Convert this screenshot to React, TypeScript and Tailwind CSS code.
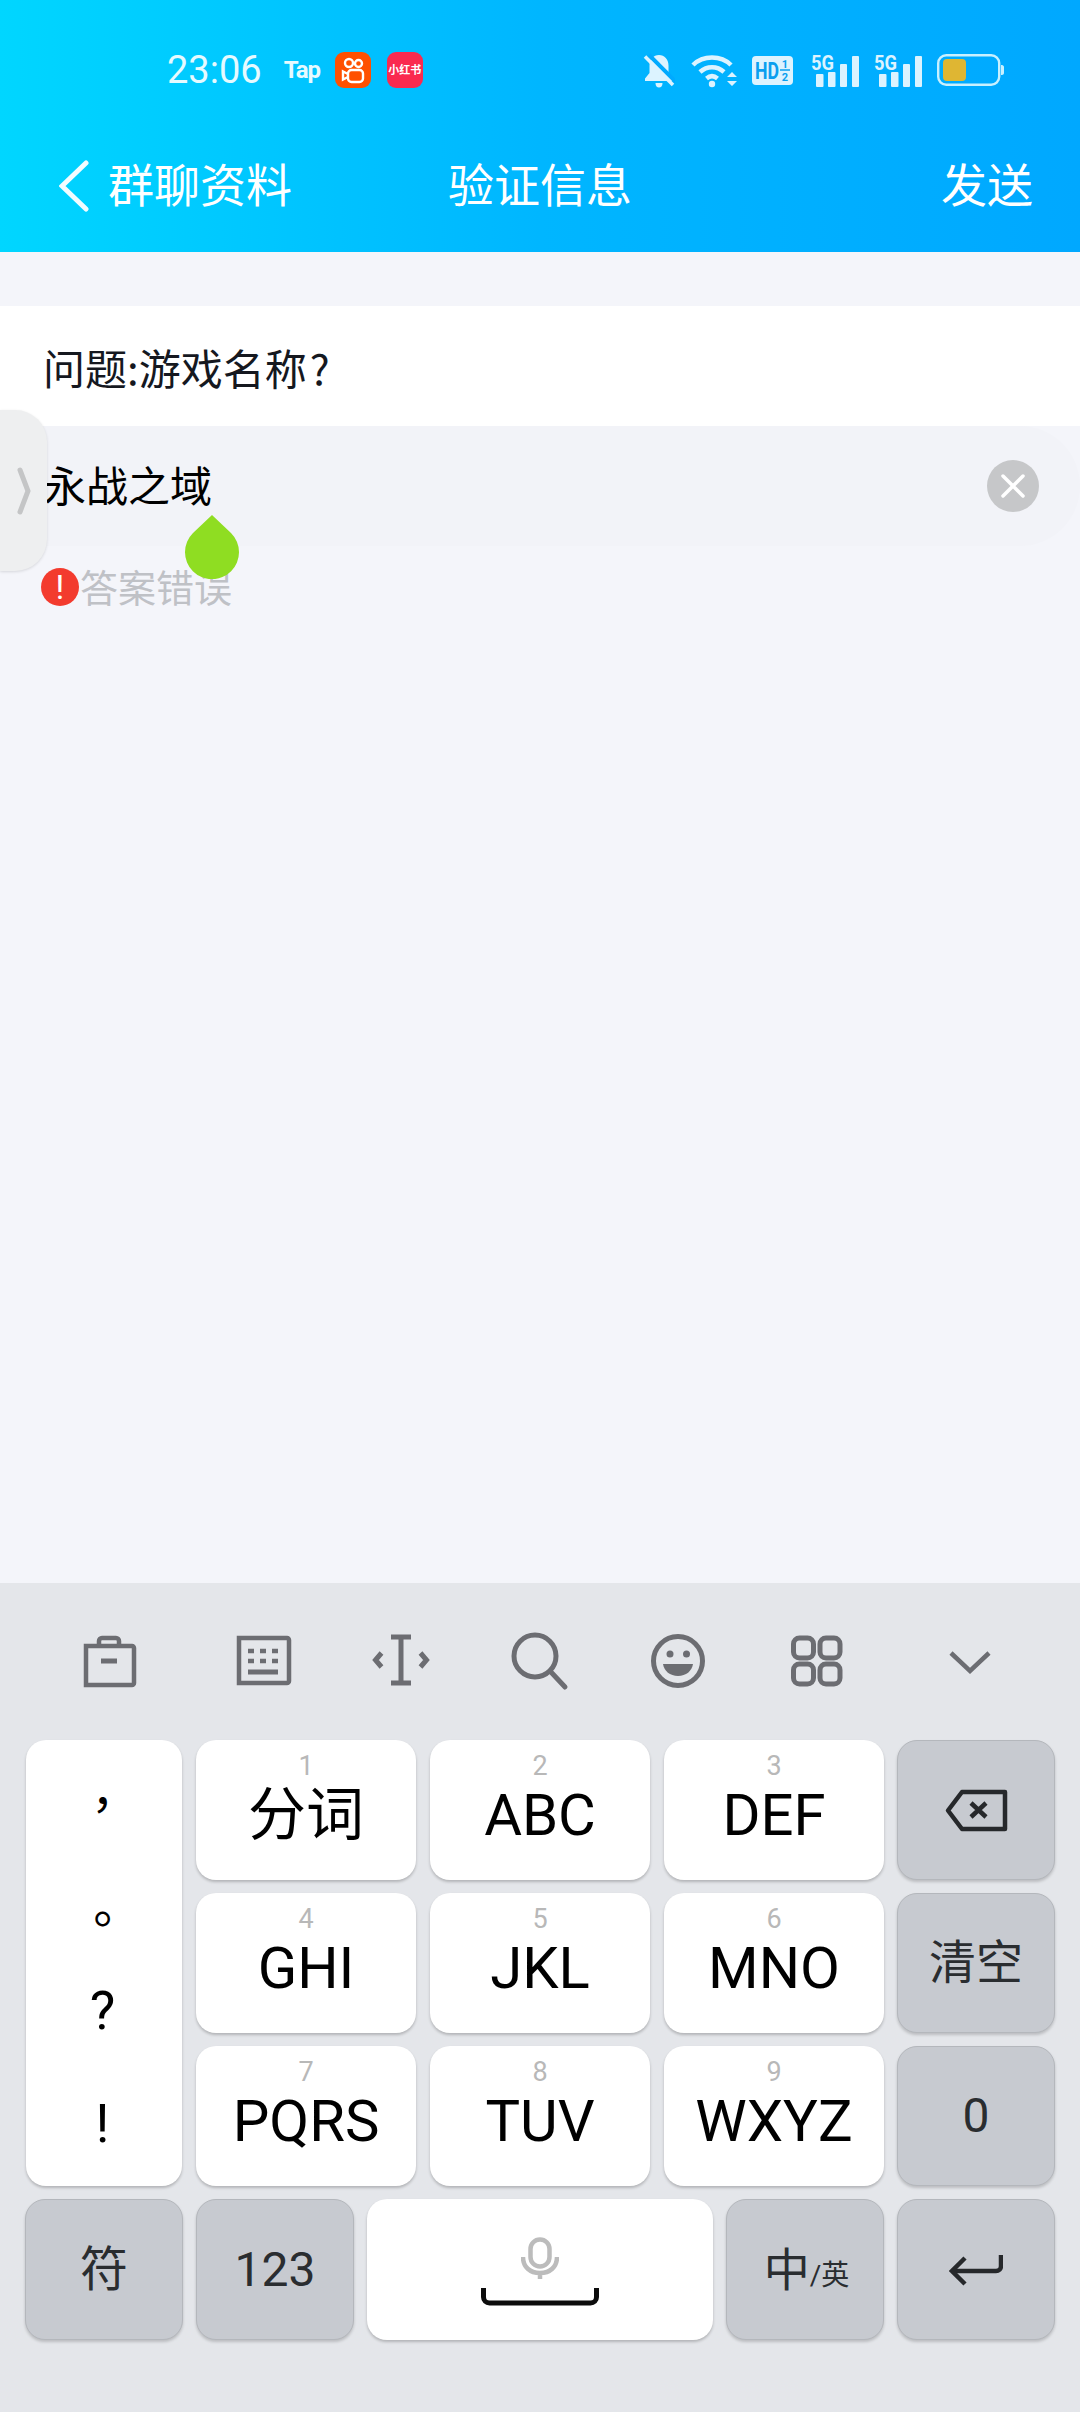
import type { ReactNode } from 'react';

const whiteKey = 'bg-white rounded-[20px] shadow-[0_2px_3px_rgba(0,0,0,0.22)]';
const grayKey = 'bg-[#c7cad0] rounded-[20px] border border-[#b4b7bc] shadow-[0_2px_3px_rgba(0,0,0,0.18)] text-[#2a2d30]';

function BellOff() {
  return (
    <svg width="32" height="35" viewBox="0 0 32 35" fill="#dcf3ff">
      <path d="M16 2c-5.500 0-9.500 4.500-9.500 10.500V20L2 25.500V28h28v-2.500L25.500 20v-7.500C25.500 6.500 21.500 2 16 2z" />
      <path d="M12.500 30h7c0 3-1.500 4.500-3.500 4.500s-3.500-1.500-3.500-4.500z" />
      <path d="M6 2L33 29" stroke="#00aaff" strokeWidth="4" />
      <path d="M2 3.500L30 32" stroke="#dcf3ff" strokeWidth="3.500" />
    </svg>
  );
}

function Wifi() {
  return (
    <svg width="46" height="36" viewBox="0 0 46 36" fill="none" stroke="#dcf3ff" strokeWidth="4.500">
      <path d="M2 13C12 3 30 3 40 13" />
      <path d="M9 20c7-6.500 17-6.500 24 0" />
      <path d="M15.500 26.500c3.500-3 7.500-3 11 0" />
      <circle cx="21" cy="32" r="3.200" fill="#dcf3ff" stroke="none" />
      <path d="M36 25l5-5 5 5zM36 29h10l-5 5z" fill="#dcf3ff" stroke="none" />
    </svg>
  );
}

function Hd() {
  return (
    <svg width="41" height="29" viewBox="0 0 41 29">
      <rect width="41" height="29" rx="4" fill="#dcf3ff" />
      <text x="3" y="23" fontFamily="Roboto" fontWeight="700" fontSize="23" fill="#0a9fef" textLength="24" lengthAdjust="spacingAndGlyphs">HD</text>
      <text x="33" y="12" textAnchor="middle" fontFamily="Roboto" fontWeight="700" fontSize="11" fill="#0a9fef">1</text>
      <text x="33" y="25" textAnchor="middle" fontFamily="Roboto" fontWeight="700" fontSize="11" fill="#0a9fef">2</text>
      <path d="M28 14h10" stroke="#0a9fef" strokeWidth="1.500" />
    </svg>
  );
}

function Signal() {
  return (
    <svg className="overflow-visible" width="48" height="33" viewBox="0 0 48 33" fill="#dcf3ff">
      <text x="0" y="15.500" fontFamily="Roboto" fontWeight="700" fontSize="20" textLength="23" lengthAdjust="spacingAndGlyphs">5G</text>
      <rect x="5" y="20" width="7.500" height="13" rx="1" />
      <rect x="17" y="18" width="7.500" height="15" rx="1" />
      <rect x="29" y="10" width="7" height="23" rx="1" />
      <rect x="41" y="2" width="7" height="31" rx="1" />
    </svg>
  );
}

function Battery() {
  return (
    <svg width="67" height="32" viewBox="0 0 67 32">
      <rect x="1.200" y="1.200" width="61" height="29.600" rx="8" fill="none" stroke="#c8f0ff" strokeWidth="2.400" />
      <rect x="6" y="5" width="23" height="22" rx="4" fill="#dfb633" />
      <path d="M64 11h1c1 0 2 1 2 2v6c0 1-1 2-2 2h-1z" fill="#c8f0ff" />
    </svg>
  );
}

function Kuaishou() {
  return (
    <div className="w-[36px] h-[36px] rounded-[9px] bg-[#ff5000] flex items-center justify-center">
      <svg width="24" height="27" viewBox="0 0 24 27" fill="none" stroke="#fff" strokeWidth="2.400">
        <circle cx="8" cy="6" r="4" />
        <circle cx="17.500" cy="6.500" r="3.500" />
        <rect x="7" y="13" width="15" height="12" rx="3.500" />
        <path d="M7 17l-5-2.500v8L7 20" />
      </svg>
    </div>
  );
}

const tools: { ml: string; icon: ReactNode }[] = [
  {
    ml: 'ml-[80px]',
    icon: (
      <svg width="60" height="60" viewBox="0 0 60 60" fill="none" stroke="#6c6d72" strokeWidth="4.500">
        <path d="M6 15h46a2 2 0 0 1 2 2v35a2 2 0 0 1-2 2H6z" />
        <path d="M19 15v-5a3 3 0 0 1 3-3h14a3 3 0 0 1 3 3v5" />
        <path d="M21 30h16" strokeWidth="5" />
      </svg>
    ),
  },
  {
    ml: 'ml-[94px]',
    icon: (
      <svg width="60" height="60" viewBox="0 0 60 60" fill="none" stroke="#6c6d72" strokeWidth="4.500">
        <path d="M5 7h48a2 2 0 0 1 2 2v41a2 2 0 0 1-2 2H5z" />
        <path d="M14 20h6M26 20h6M38 20h6M14 30h6M26 30h6M38 30h6" strokeWidth="4.500" />
        <path d="M14 41h30" strokeWidth="5" />
      </svg>
    ),
  },
  {
    ml: 'ml-[77px]',
    icon: (
      <svg width="60" height="60" viewBox="0 0 60 60" fill="none" stroke="#6c6d72">
        <path d="M20 6h20M20 52h20M30 6v46" strokeWidth="5" />
        <path d="M10.500 22l-6 7 6 7M49.500 22l6 7-6 7" strokeWidth="5" />
      </svg>
    ),
  },
  {
    ml: 'ml-[78px]',
    icon: (
      <svg width="60" height="60" viewBox="0 0 60 60" fill="none" stroke="#6c6d72" strokeWidth="5">
        <circle cx="26" cy="25" r="21" />
        <path d="M41 40l15 16" strokeLinecap="round" />
      </svg>
    ),
  },
  {
    ml: 'ml-[79px]',
    icon: (
      <svg width="60" height="60" viewBox="0 0 60 60" fill="none" stroke="#6c6d72" strokeWidth="5">
        <circle cx="30" cy="30" r="24.500" />
        <circle cx="22" cy="23" r="3.500" fill="#6c6d72" stroke="none" />
        <circle cx="38.500" cy="23" r="3.500" fill="#6c6d72" stroke="none" />
        <path d="M15 33h30c-1 7-7 12-15 12s-14-5-15-12z" fill="#6c6d72" stroke="none" />
      </svg>
    ),
  },
  {
    ml: 'ml-[78px]',
    icon: (
      <svg width="60" height="60" viewBox="0 0 60 60" fill="none" stroke="#6c6d72" strokeWidth="5">
        <rect x="7.500" y="7" width="20" height="20" rx="6" />
        <rect x="34" y="7" width="20" height="20" rx="6" />
        <rect x="7.500" y="33" width="20" height="20" rx="6" />
        <rect x="34" y="33" width="20" height="20" rx="6" />
      </svg>
    ),
  },
  {
    ml: 'ml-[94px]',
    icon: (
      <svg width="60" height="60" viewBox="0 0 60 60" fill="none" stroke="#6c6d72" strokeWidth="4.500">
        <path d="M11 22l19 18 19-18" />
      </svg>
    ),
  },
];

const letterKeys = [
  ['1', '分词'],
  ['2', 'ABC'],
  ['3', 'DEF'],
  ['4', 'GHI'],
  ['5', 'JKL'],
  ['6', 'MNO'],
  ['7', 'PQRS'],
  ['8', 'TUV'],
  ['9', 'WXYZ'],
];

function LetterKey({ num, label }: { num: string; label: string }) {
  return (
    <div className={`${whiteKey} h-[140px] flex flex-col items-center pt-[12px]`}>
      <div className="text-[27px] leading-[28px] text-[#b8b8b8]">{num}</div>
      <div className="text-[58px] leading-[64px] mt-[3px] text-black">{label}</div>
    </div>
  );
}

export default function App() {
  return (
    <div className="relative w-[1080px] h-[2412px] overflow-hidden flex flex-col bg-[#f4f5fa] font-['Roboto','Noto_Sans_CJK_SC',sans-serif]">
      {/* 顶部蓝色渐变区 */}
      <div className="h-[252px] bg-gradient-to-r from-[#00d6ff] via-[#00b6ff] to-[#00a8ff] text-white">
        {/* 状态栏 */}
        <div className="h-[140px] flex items-center pl-[167px] pr-[76px]">
          <div className="text-[38px] leading-none text-[#e6faff]">23:06</div>
          <div className="ml-[22px] w-[35px] text-[24px] font-bold leading-none tracking-[-1px] text-[#e6faff]">Tap</div>
          <div className="ml-[16px]"><Kuaishou /></div>
          <div className="ml-[16px] w-[36px] h-[36px] rounded-[9px] bg-[#fa2a4f] flex items-center justify-center text-[11px] font-bold leading-none whitespace-nowrap">小红书</div>
          <div className="ml-auto flex items-center">
            <BellOff />
            <div className="ml-[16px]"><Wifi /></div>
            <div className="ml-[15px]"><Hd /></div>
            <div className="ml-[18px]"><Signal /></div>
            <div className="ml-[15px]"><Signal /></div>
            <div className="ml-[15px]"><Battery /></div>
          </div>
        </div>
        {/* 导航栏 */}
        <div className="h-[92px] grid grid-cols-[1fr_auto_1fr] items-center text-[46px] leading-none">
          <div className="flex items-center pl-[59px]">
            <svg width="30" height="52" viewBox="0 0 30 52" fill="none" stroke="#f2fcff" strokeWidth="5" strokeLinecap="round">
              <path d="M27 3L3 26l24 23" />
            </svg>
            <span className="ml-[19px]">群聊资料</span>
          </div>
          <div>验证信息</div>
          <div className="text-right pr-[47px]">发送</div>
        </div>
      </div>

      {/* 内容区 */}
      <div className="flex-1 pt-[54px]">
        <div className="h-[120px] bg-white flex items-center pl-[43px] pt-[1px] text-[42px] text-[#15181f] font-['Noto_Sans_CJK_SC',sans-serif]">
          问题:游戏名称<span className="ml-[3px]">?</span>
        </div>
        <div className="h-[120px] bg-[#f2f3f8] rounded-r-[60px] flex items-center justify-between pl-[44px] pr-[41px] text-[42px] text-black">
          <span className="mt-[3px]">永战之域</span>
          <div className="w-[52px] h-[52px] rounded-full bg-[#c6c7c9] flex items-center justify-center">
            <svg width="26" height="26" viewBox="0 0 26 26" stroke="#fff" strokeWidth="3.500" strokeLinecap="round">
              <path d="M3 3l20 20M23 3L3 23" />
            </svg>
          </div>
        </div>
        <div className="mt-[22px] pl-[41px] flex items-center h-[38px]">
          <div className="w-[38px] h-[38px] rounded-full bg-[#f33b2e] flex items-center justify-center text-white text-[34px] leading-none">!</div>
          <span className="ml-[1px] mt-[3px] text-[38px] leading-none text-[#bfc1c6]">答案错误</span>
        </div>
      </div>

      {/* 键盘 */}
      <div className="h-[829px] bg-[#e4e6ea]">
        <div className="h-[157px] flex items-center pb-[1px]">
          {tools.map((t, i) => (
            <div key={i} className={`${t.ml} w-[60px] h-[60px]`}>{t.icon}</div>
          ))}
        </div>

        <div className="flex pl-[26px]">
          <div className={`${whiteKey} w-[156px] h-[446px] flex flex-col items-center pr-[3px] text-[48px] leading-none text-black`}>
            <div className="h-[152px] pt-[37px] font-['Noto_Sans_CJK_TC',sans-serif]">，</div>
            <div className="h-[81px] font-['Noto_Sans_CJK_TC',sans-serif]">。</div>
            <div className="h-[113px] pt-[11px] text-[54px]">?</div>
            <div className="pt-[11px] text-[54px]">!</div>
          </div>
          <div className="ml-[14px] w-[688px] grid grid-cols-[220px_220px_220px] gap-x-[14px] gap-y-[13px]">
            {letterKeys.map(([n, l]) => (
              <LetterKey key={n} num={n} label={l} />
            ))}
          </div>
          <div className="ml-[13px] w-[158px] flex flex-col gap-[13px]">
            <div className={`${grayKey} h-[140px] flex items-center justify-center`}>
              <svg width="63" height="43" viewBox="0 0 63 43" fill="none" stroke="#26282b" strokeWidth="4.500" strokeLinejoin="round">
                <path d="M17 3h43v37H17L3 21.500z" />
                <path d="M26 14l15 14M41 14L26 28" strokeWidth="4.500" />
              </svg>
            </div>
            <div className={`${grayKey} h-[140px] flex items-center justify-center text-[47px]`}>清空</div>
            <div className={`${grayKey} h-[140px] flex items-center justify-center text-[48px]`}>0</div>
          </div>
        </div>

        <div className="flex pl-[25px] gap-[13px] mt-[13px]">
          <div className={`${grayKey} w-[158px] h-[141px] flex items-center justify-center text-[48px]`}>符</div>
          <div className={`${grayKey} w-[158px] h-[141px] flex items-center justify-center text-[48px]`}>123</div>
          <div className={`${whiteKey} w-[346px] h-[141px] flex flex-col items-center pt-[38px]`}>
            <svg width="38" height="42" viewBox="0 0 38 42" fill="none" stroke="#bcbcbc" strokeWidth="4.500">
              <rect x="9.500" y="2.500" width="19" height="27" rx="9.500" />
              <path d="M2 20c0 10 7 16 17 16s17-6 17-16M19 36v6" />
            </svg>
            <svg className="mt-[9px]" width="118" height="18" viewBox="0 0 118 18" fill="none" stroke="#0c0c0c" strokeWidth="5">
              <path d="M2.500 0v9a6 6 0 0 0 6 6h101a6 6 0 0 0 6-6V0" />
            </svg>
          </div>
          <div className={`${grayKey} w-[158px] h-[141px] flex items-center justify-center pl-[3px]`}>
            <span className="text-[46px] leading-none">中</span>
            <span className="text-[28px] leading-none mt-[12px]">/英</span>
          </div>
          <div className={`${grayKey} w-[158px] h-[141px] flex items-center justify-center`}>
            <svg className="mt-[3px]" width="54" height="32" viewBox="0 0 54 32" fill="none" stroke="#26282b" strokeWidth="4.500">
              <path d="M52 0v11a5 5 0 0 1-5 5H4" />
              <path d="M16 3L3 16l13 13" />
            </svg>
          </div>
        </div>
      </div>

      {/* 左侧悬浮把手 */}
      <div className="absolute left-0 top-[410px] w-[47px] h-[161px] rounded-r-[32px] bg-[#eeeff0] shadow-[0_1px_3px_rgba(0,0,0,0.12)] flex items-center pl-[17px]">
        <svg width="14" height="48" viewBox="0 0 14 48" fill="none" stroke="#c4c5c6" strokeWidth="5" strokeLinecap="round">
          <path d="M3 3l8 21-8 21" />
        </svg>
      </div>

      {/* 光标拖动水滴 */}
      <svg className="absolute left-[185px] top-[515px]" width="54" height="64" viewBox="0 0 54 64" fill="#8fdd22">
        <path d="M27 0L8 18A27 27 0 1 0 46 18Z" />
      </svg>
    </div>
  );
}
